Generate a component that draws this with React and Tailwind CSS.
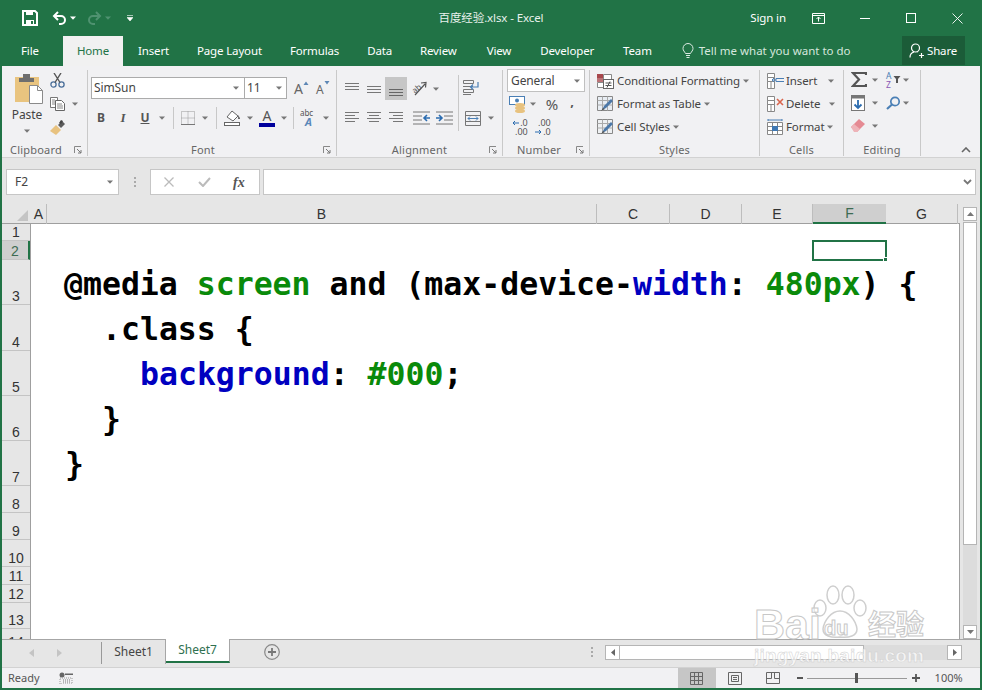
import React from "react";

const Caret = ({ c = "#777" }) => (
  <svg width="6" height="4" viewBox="0 0 6 4" className="shrink-0"><path d="M0 0.5h6L3 3.8z" fill={c} /></svg>
);
const Cell = ({ className = "", children }) => <div className={"flex items-center justify-center shrink-0 h-[22px] " + className}>{children}</div>;
const Sep = ({ className = "" }) => <div className={"w-px h-[22px] bg-[#c8c8c8] shrink-0 " + className} />;

const Launcher = () => (
  <svg width="8" height="8" viewBox="0 0 8 8" className="shrink-0"><path d="M0.5 7V0.5H7" stroke="#888" fill="none" /><path d="M3 3l4 4M7 4v3H4" stroke="#777" fill="none" /></svg>
);

const Group = ({ className, label, launcher, children, labelClass = "" }) => (
  <div className={"shrink-0 h-[86px] mt-[4px] border-r border-[#c9c9c9] flex flex-col " + className}>
    <div className="h-[72px] shrink-0">{children}</div>
    <div className="relative h-[16px] shrink-0 flex items-center justify-center text-[11px] text-[#666] tracking-[0.2px]">
      <span className={labelClass}>{label}</span>
      {launcher && <span className="absolute right-[5px] top-[4px] flex"><Launcher /></span>}
    </div>
  </div>
);

const Lines = ({ rows, w = 14, h = 14, c = "#777" }) => (
  <svg width={w} height={h} viewBox={`0 0 ${w} ${h}`}>
    {rows.map(([x1, x2, y], i) => <path key={i} d={`M${x1} ${y + 0.5}H${x2}`} stroke={c} />)}
  </svg>
);

const Save = () => (
  <svg width="16" height="16" viewBox="0 0 16 16"><path d="M1 1h12l2 2v12H1z" fill="none" stroke="#fff" strokeWidth="2" /><path d="M4 1h7v4H4zM4 10h8v5H4z" fill="#fff" /><path d="M9 11h2v3H9z" fill="#217346" /></svg>
);
const Undo = ({ c = "#fff" }) => (
  <svg width="15" height="14" viewBox="0 0 15 14"><path d="M6 1L2 5l4 4" fill="none" stroke={c} strokeWidth="2" /><path d="M2.5 5H9a4 4 0 0 1 0 8H7" fill="none" stroke={c} strokeWidth="2" /></svg>
);
const Paste = () => (
  <svg width="28" height="30" viewBox="0 0 28 30"><rect x="0" y="3" width="24" height="25" fill="#e9c47f" /><path d="M4 8V4h4V0h7v4h4v4z" fill="#6e6e6e" /><path d="M14.500 11.500h8l5 5v13h-13z" fill="#fff" stroke="#8a8a8a" /><path d="M22.500 11.500v5h5" fill="none" stroke="#8a8a8a" /></svg>
);
const Cut = () => (
  <svg width="15" height="15" viewBox="0 0 15 15"><circle cx="3.500" cy="11.500" r="2.600" fill="none" stroke="#4a6f9a" strokeWidth="1.300" /><circle cx="11.500" cy="11.500" r="2.600" fill="none" stroke="#4a6f9a" strokeWidth="1.300" /><path d="M5 9.500L11 0M10 9.500L4 0" stroke="#555" strokeWidth="1.400" /></svg>
);
const Copy = () => (
  <svg width="16" height="14" viewBox="0 0 16 14"><path d="M0.500 0.500h7v10h-7z" fill="#fff" stroke="#777" /><path d="M5.500 3.500h6l3 3v7h-9z" fill="#fff" stroke="#666" /><path d="M2 3h3M2 5h3M2 7h3M7 7h5M7 9h6M7 11h6" stroke="#888" /></svg>
);
const Painter = () => (
  <svg width="16" height="15" viewBox="0 0 16 15"><path d="M0 11l6-6 5 5-5 5z" fill="#e8c27f" /><path d="M8 5l4-4 3 3-4 4z" fill="#5b5b5b" /><path d="M9 3l2-3 2 1-2 3z" fill="#444" /></svg>
);
const GrowA = ({ up }) => (
  <svg width="15" height="14" viewBox="0 0 15 14" className="overflow-visible">
    <text x={up ? 0 : 1} y="13" fontSize={up ? 14 : 12} fontFamily="Noto Sans" fill="#666">A</text>
    <path d={up ? "M9.500 4l2.500-3.500L14.500 4z" : "M9.500 0h5L12 3.500z"} fill="#5d87b5" />
  </svg>
);
const Borders = () => (
  <svg width="14" height="14" viewBox="0 0 14 14"><path d="M.5.5h13v13H.5zM.5 7h13M7 .5v13" fill="none" stroke="#999" strokeDasharray="1 1" /><path d="M0 13.500h14" stroke="#777" /></svg>
);
const Fill = () => (
  <svg width="17" height="16" viewBox="0 0 17 16"><path d="M3 7l5-6 6 5-5 5z" fill="#fff" stroke="#666" /><path d="M14 5l2 3v1h-2z" fill="#6d6d6d" /><rect x="0.500" y="12.500" width="15" height="3" fill="#fff" stroke="#666" /></svg>
);
const FontColor = () => (
  <div className="flex flex-col items-center w-[16px]">
    <span className="text-[14px] leading-[13px] font-['Noto_Sans'] text-[#555]">A</span>
    <div className="w-[16px] h-[4px] mt-[1px] bg-[#00009c]" />
  </div>
);
const Phonetic = () => (
  <svg width="16" height="16" viewBox="0 0 16 16" className="overflow-visible"><text x="0" y="6" fontSize="8" fontFamily="Noto Sans" fill="#555">abc</text><text x="5" y="16" fontSize="11" fontWeight="bold" fontStyle="italic" fontFamily="Noto Sans" fill="#5b87b8">A</text></svg>
);
const Orient = () => (
  <svg width="16" height="15" viewBox="0 0 16 15" className="overflow-visible"><text x="0" y="11" fontSize="8" fontFamily="Noto Sans" fill="#555" transform="rotate(-40 4 8)">ab</text><path d="M3 14L13 3M9 2l5-.5-.5 5" fill="none" stroke="#555" strokeWidth="1.200" /></svg>
);
const Wrap = () => (
  <svg width="16" height="16" viewBox="0 0 16 16"><path d="M0.500 1.500h10v3h-10zM0.500 10.500h10v3h-10zM0 7.500h10M0 15.500h8" fill="none" stroke="#777" /><path d="M15 3v5H8M10 5.500L7.500 8l2.500 2.500" fill="none" stroke="#4a7fb5" strokeWidth="1.200" /></svg>
);
const Indent = ({ flip }) => (
  <svg width="17" height="14" viewBox="0 0 17 14" className={flip ? "-scale-x-100" : ""}><path d="M0 1h17M0 13h17M8 5h9M8 9h9" stroke="#777" /><path d="M0 7h5M3 4l3 3-3 3" fill="none" stroke="#2b6cb0" strokeWidth="1.600" /></svg>
);
const Merge = () => (
  <svg width="16" height="15" viewBox="0 0 16 15"><path d="M.5.5h15v14H.5zM.5 4.500h15M.5 10.500h15" fill="none" stroke="#777" /><path d="M3 7.500h10M5 5.500l-2 2 2 2M11 5.500l2 2-2 2" fill="none" stroke="#4a7fb5" /></svg>
);
const Accounting = () => (
  <svg width="18" height="17" viewBox="0 0 18 17"><rect x="0.500" y="0.500" width="15" height="8" fill="#fff" stroke="#4a7fb5" /><circle cx="8" cy="4.500" r="2" fill="#4a7fb5" /><ellipse cx="11" cy="9" rx="5" ry="2" fill="#e8c27f" /><ellipse cx="11" cy="12" rx="5" ry="2" fill="#e8c27f" /><ellipse cx="11" cy="15" rx="5" ry="2" fill="#e8c27f" /></svg>
);
const DecBtn = ({ top, bottom, arrowRight }) => (
  <div className="flex flex-col text-[9px] leading-[9px] font-['Noto_Sans'] text-[#555] items-end w-[19px]">
    <div className="flex items-center h-[9px]">
      {!arrowRight ? <svg width="7" height="6" viewBox="0 0 7 6" className="mr-px"><path d="M7 3H1M3 1L1 3l2 2" fill="none" stroke="#2b6cb0" /></svg> : null}
      <span>{top}</span>
    </div>
    <div className="flex items-center h-[9px]">
      {arrowRight ? <svg width="7" height="6" viewBox="0 0 7 6" className="mr-px"><path d="M0 3h6M4 1l2 2-2 2" fill="none" stroke="#2b6cb0" /></svg> : null}
      <span>{bottom}</span>
    </div>
  </div>
);
const TableIc = ({ kind }) => (
  <svg width="17" height="16" viewBox="0 0 17 16">
    {kind === "cond" ? (
      <>
        <path d="M0 1h6v4H0z" fill="#a8484d" /><path d="M0 5h6v4H0z" fill="#a8484d" opacity=".75" /><path d="M6.500 1.500h8v7h-8zM0.500 9.500h7v5h-7z" fill="#fff" stroke="#888" />
        <rect x="6.500" y="6.500" width="10" height="9" fill="#fff" stroke="#666" /><path d="M8.500 10h6M8.500 12.500h6M13 8.500l-3 6" stroke="#555" />
      </>
    ) : (
      <>
        <path d="M.5.5h15v14H.5z" fill={kind === "fmt" ? "#e8edf3" : "#eef0f2"} stroke="#888" /><path d="M.5 4.500h15M.5 9h15M5.500.5v14M10.500.5v14" stroke="#aaa" fill="none" />
        <path d="M5 14l2-4 7-7 2 2-7 7z" fill="#4c78a8" /><path d="M4 15l2-3 2 1z" fill="#555" />
      </>
    )}
  </svg>
);
const CellIc = ({ kind }) => (
  <svg width="17" height="16" viewBox="0 0 17 16">
    {kind === "format" ? (
      <>
        <path d="M.5 3.500h15v12H.5zM.5 7.500h15M.5 11.500h15M5.500 3.500v12M10.500 3.500v12" fill="#fff" stroke="#888" /><rect x="5" y="7" width="6" height="5" fill="#3f78b3" /><path d="M1 1h14M1 0v2M15 0v2" stroke="#4a7fb5" />
      </>
    ) : (
      <>
        <path d="M.5.5h7v4h-7zM.5 4.500h7v4h-7zM.5 8.500h7v7h-7zM4 8.500v7" fill="#fff" stroke="#888" />
        {kind === "insert" ? <path d="M17 5.500H9v3h8M9 7H5M7 5L5 7l2 2" fill="none" stroke="#4a7fb5" /> : <path d="M10 3l6 6M16 3l-6 6" stroke="#d9654c" strokeWidth="1.600" />}
      </>
    )}
  </svg>
);
const Sigma = () => (
  <svg width="16" height="15" viewBox="0 0 16 15"><path d="M15 3V1H2l6 6.500L2 14h13v-2" fill="none" stroke="#555" strokeWidth="2.200" /></svg>
);
const Sort = () => (
  <svg width="15" height="17" viewBox="0 0 15 17" className="overflow-visible"><text x="0" y="7.500" fontSize="8.500" fontFamily="Noto Sans" fill="#4a7fb5">A</text><text x="0" y="16.500" fontSize="8.500" fontFamily="Noto Sans" fill="#8a58b5">Z</text><path d="M7.500 5h7l-2.500 3v4h-2V8z" fill="#555" /></svg>
);
const FillDown = () => (
  <svg width="14" height="16" viewBox="0 0 14 16"><rect x="0.500" y="0.500" width="13" height="15" fill="#fff" stroke="#777" /><rect width="14" height="3.500" fill="#777" /><path d="M7 5v8M3.500 9.500L7 13l3.500-3.500" fill="none" stroke="#2b6cb0" strokeWidth="1.800" /></svg>
);
const Find = () => (
  <svg width="15" height="14" viewBox="0 0 15 14"><circle cx="9" cy="5.500" r="4.200" fill="none" stroke="#4a7fb5" strokeWidth="1.700" /><path d="M6 8.500L1 13" stroke="#4a7fb5" strokeWidth="2.200" /></svg>
);
const Eraser = () => (
  <svg width="14" height="13" viewBox="0 0 14 13"><path d="M0 8l8-8 6 5-8 8H4z" fill="#e58a93" /><path d="M0 8l3-3 6 5-3 3H3z" fill="#eeb3b8" /></svg>
);

const colHeads = [
  ["w-[16px]", "A", false], ["w-[550px]", "B", false], ["w-[73px]", "C", false], ["w-[72px]", "D", false],
  ["w-[71px]", "E", false], ["w-[73px]", "F", true], ["w-[72px]", "G", false],
];
const rowHeads = [
  ["h-[17px]", "1"], ["h-[19px]", "2", true], ["h-[45px]", "3"], ["h-[46px]", "4"], ["h-[45px]", "5"], ["h-[45px]", "6"], ["h-[45px]", "7"],
  ["h-[27px]", "8"], ["h-[27px]", "9"], ["h-[27px]", "10"], ["h-[18px]", "11"], ["h-[18px]", "12"], ["h-[26px]", "13"], ["h-[22px]", "14"],
];

const G = ({ children }) => <span className="text-[#0a8a0a]">{children}</span>;
const B = ({ children }) => <span className="text-[#0000c0]">{children}</span>;

export default function App() {
  return (
    <div className="w-[982px] h-[690px] overflow-hidden bg-[#217346] px-[2px] pb-[2px] flex flex-col font-['Noto_Sans','Noto_Sans_CJK_SC',sans-serif] relative">
      {/* title bar */}
      <div className="grid grid-cols-[1fr_auto_1fr] h-[36px] shrink-0 items-center text-white text-[11.500px] tracking-[-0.1px]">
        <div className="flex items-center">
          <div className="ml-[20px] flex"><Save /></div>
          <div className="ml-[14px] flex"><Undo /></div>
          <div className="ml-[3px] flex"><Caret c="#fff" /></div>
          <div className="ml-[11px] flex -scale-x-100"><Undo c="#4f9270" /></div>
          <div className="ml-[3px] flex"><Caret c="#4f9270" /></div>
          <svg width="6" height="6" viewBox="0 0 6 6" className="ml-[16px]"><path d="M0 .5h6M0 2.500h6L3 6z" stroke="#fff" strokeWidth=".6" fill="#fff" /></svg>
        </div>
        <div className="text-[11.500px] text-[#e8f1ec]">百度经验.xlsx - Excel</div>
        <div className="flex items-center justify-end">
          <span className="text-[11.500px]">Sign in</span>
          <svg width="13" height="11" viewBox="0 0 13 11" className="ml-[26px]"><path d="M.5.5h12v10H.5zM.5 2.500h12" fill="none" stroke="#fff" /><path d="M6.500 8.500V4M4.500 6l2-2 2 2" fill="none" stroke="#fff" /></svg>
          <div className="ml-[35px] w-[10px] h-px bg-white" />
          <div className="ml-[36px] w-[10px] h-[10px] border border-white" />
          <svg width="11" height="11" viewBox="0 0 11 11" className="ml-[36px] mr-[17px]"><path d="M.5.5l10 10M10.500.5l-10 10" stroke="#fff" strokeWidth=".9" /></svg>
        </div>
      </div>

      {/* tabs */}
      <div className="flex h-[30px] shrink-0 items-center text-[11.500px] tracking-[-0.15px] text-white">
        <span className="ml-[19px] w-[42px]">File</span>
        <div className="h-[30px] w-[60px] bg-[#f1f1f1] text-[#217346] flex items-center justify-center">Home</div>
        <span className="ml-[15px]">Insert</span>
        <span className="ml-[28px]">Page Layout</span>
        <span className="ml-[28px]">Formulas</span>
        <span className="ml-[28px]">Data</span>
        <span className="ml-[28px]">Review</span>
        <span className="ml-[30px]">View</span>
        <span className="ml-[29px]">Developer</span>
        <span className="ml-[29px]">Team</span>
        <svg width="12" height="16" viewBox="0 0 12 16" className="ml-[30px] shrink-0"><path d="M3.500 10.500C2.500 8.500 1 7.500 1 5.500a5 5 0 0 1 10 0c0 2-1.500 3-2.500 5zM4 12.500h4M4.500 14.500h3" fill="none" stroke="#dcebe3" /></svg>
        <span className="ml-[5px] text-[#d5e7dd] tracking-[0px]">Tell me what you want to do</span>
        <div className="ml-auto mr-[15px] mb-px w-[63px] h-[29px] bg-[#1b5c38] flex items-center pl-[7px]">
          <svg width="15" height="15" viewBox="0 0 15 15"><circle cx="6.500" cy="5" r="4" fill="none" stroke="#fff" strokeWidth="1.200" /><path d="M1 14.500c0-3 2-5 4-5.500M8 9l.5 0M10 12.500h5M12.500 10v5" fill="none" stroke="#fff" strokeWidth="1.200" /></svg>
          <span className="ml-[3px]">Share</span>
        </div>
      </div>

      {/* ribbon */}
      <div className="flex h-[92px] shrink-0 bg-[#f1f1f3] border-b border-[#d2d2d2] text-[11.500px] tracking-[-0.1px] text-[#444] relative">
        <Group className="w-[86px]" label="Clipboard" launcher labelClass="-ml-[17px]">
          <div className="flex">
            <div className="ml-[9px] w-[32px] flex flex-col items-center pt-[4px]">
              <div className="flex ml-[3px]"><Paste /></div>
              <span className="leading-[14px] mt-[4px] text-[12px]">Paste</span>
              <div className="mt-[7px] flex"><Caret /></div>
            </div>
            <div className="ml-[7px] flex flex-col pt-[3px]">
              <Cut />
              <div className="flex items-center mt-[9px]"><Copy /><div className="ml-[6px] flex"><Caret /></div></div>
              <div className="mt-[9px] flex"><Painter /></div>
            </div>
          </div>
        </Group>

        <Group className="w-[249px]" label="Font" launcher labelClass="-ml-[18px]">
          <div className="flex items-center mt-[7px] ml-[3px]">
            <div className="w-[154px] h-[22px] bg-white border border-[#ababab] flex items-center pl-[2px] pr-[5px] justify-between"><span className="text-[12px]">SimSun</span><Caret /></div>
            <div className="w-[43px] h-[22px] -ml-px bg-white border border-[#ababab] flex items-center pl-[2px] pr-[4px] justify-between"><span className="text-[12px]">11</span><Caret /></div>
            <div className="ml-[7px] flex"><GrowA up /></div>
            <div className="ml-[6px] flex"><GrowA /></div>
          </div>
          <div className="flex items-center mt-[8px] ml-[2px]">
            <Cell className="w-[22px] font-bold text-[12px] text-[#555]">B</Cell>
            <Cell className="w-[22px] italic text-[13px] font-['Liberation_Serif'] font-bold text-[#555]">I</Cell>
            <Cell className="w-[22px] underline font-bold text-[12px] text-[#555]">U</Cell>
            <Cell className="w-[12px]"><Caret /></Cell>
            <Sep className="ml-[5px]" />
            <Cell className="w-[28px]"><Borders /></Cell>
            <Cell className="w-[6px]"><Caret /></Cell>
            <Sep className="ml-[8px]" />
            <Cell className="w-[30px]"><Fill /></Cell>
            <Cell className="w-[6px]"><Caret /></Cell>
            <Cell className="w-[28px]"><FontColor /></Cell>
            <Cell className="w-[6px]"><Caret /></Cell>
            <Sep className="ml-[6px]" />
            <Cell className="w-[28px]"><Phonetic /></Cell>
            <Cell className="w-[8px]"><Caret /></Cell>
          </div>
        </Group>

        <Group className="w-[166px]" label="Alignment" launcher>
          <div className="flex">
            <div className="w-[122px] shrink-0 border-r border-[#c8c8c8] h-[56px] mt-[5px]">
              <div className="flex items-center ml-[4px] mt-[2px]">
                <Cell className="w-[22px] h-[23px]"><Lines rows={[[0, 14, 1], [0, 14, 4], [0, 14, 7]]} /></Cell>
                <Cell className="w-[22px] h-[23px]"><Lines rows={[[0, 14, 4], [0, 14, 7], [0, 14, 10]]} /></Cell>
                <Cell className="w-[22px] h-[23px] bg-[#c6c6c6]"><Lines c="#666" rows={[[0, 14, 7], [0, 14, 10], [0, 14, 13]]} /></Cell>
                <Cell className="w-[24px] h-[23px] ml-[1px]"><Orient /></Cell>
                <Cell className="w-[8px] h-[23px]"><Caret /></Cell>
              </div>
              <div className="flex items-center ml-[4px] mt-[7px]">
                <Cell className="w-[22px]"><Lines rows={[[0, 14, 1], [0, 10, 4], [0, 14, 7], [0, 10, 10]]} /></Cell>
                <Cell className="w-[22px]"><Lines rows={[[0, 14, 1], [2, 12, 4], [0, 14, 7], [2, 12, 10]]} /></Cell>
                <Cell className="w-[22px]"><Lines rows={[[0, 14, 1], [4, 14, 4], [0, 14, 7], [4, 14, 10]]} /></Cell>
                <Cell className="w-[24px] ml-[2px]"><Indent flip /></Cell>
                <Cell className="w-[22px]"><Indent /></Cell>
              </div>
            </div>
            <div className="flex flex-col">
              <Cell className="w-[24px] mt-[6px]"><Wrap /></Cell>
              <div className="flex items-center mt-[9px] ml-[4px]"><Cell className="w-[20px]"><Merge /></Cell><Cell className="w-[14px] ml-[1px]"><Caret /></Cell></div>
            </div>
          </div>
        </Group>

        <Group className="w-[87px]" label="Number" launcher labelClass="-ml-[14px]">
          <div className="ml-[4px] -mt-px w-[78px] h-[23px] bg-white border border-[#c0c0c0] flex items-center pl-[3px] pr-[4px] justify-between"><span className="text-[12px]">General</span><Caret /></div>
          <div className="flex items-center ml-[5px] mt-[1px]">
            <Cell className="w-[20px]"><Accounting /></Cell>
            <Cell className="w-[8px] ml-[1px]"><Caret /></Cell>
            <Cell className="w-[24px] text-[15px] text-[#555] ml-[3px]">%</Cell>
            <Cell className="w-[14px] ml-[1px] font-bold text-[#555] text-[13px] pb-[4px]">,</Cell>
          </div>
          <div className="flex items-center ml-[5px] mt-[1px]">
            <Cell className="w-[20px]"><DecBtn top=".0" bottom=".00" /></Cell>
            <Cell className="w-[20px] ml-[3px]"><DecBtn top=".00" bottom=".0" arrowRight /></Cell>
          </div>
        </Group>

        <Group className="w-[170px]" label="Styles">
          <div className="flex flex-col pl-[7px] -mt-px">
            <div className="flex items-center h-[23px]"><TableIc kind="cond" /><span className="ml-[3px]">Conditional Formatting</span><div className="ml-[3px] flex"><Caret /></div></div>
            <div className="flex items-center h-[23px]"><TableIc kind="fmt" /><span className="ml-[3px]">Format as Table</span><div className="ml-[3px] flex"><Caret /></div></div>
            <div className="flex items-center h-[23px]"><TableIc kind="style" /><span className="ml-[3px]">Cell Styles</span><div className="ml-[3px] flex"><Caret /></div></div>
          </div>
        </Group>

        <Group className="w-[84px]" label="Cells">
          <div className="flex flex-col pl-[7px] -mt-px">
            <div className="flex items-center h-[23px]"><CellIc kind="insert" /><span className="ml-[2px]">Insert</span><div className="ml-[11px] flex"><Caret /></div></div>
            <div className="flex items-center h-[23px]"><CellIc kind="delete" /><span className="ml-[2px]">Delete</span><div className="ml-[9px] flex"><Caret /></div></div>
            <div className="flex items-center h-[23px]"><CellIc kind="format" /><span className="ml-[2px]">Format</span><div className="ml-[3px] flex"><Caret /></div></div>
          </div>
        </Group>

        <Group className="w-[77px]" label="Editing">
          <div className="flex flex-col pl-[7px] -mt-[2px]">
            <div className="flex items-center h-[23px]"><div className="w-[16px] flex"><Sigma /></div><div className="ml-[5px] flex"><Caret /></div><div className="ml-[8px] flex"><Sort /></div><div className="ml-[2px] flex"><Caret /></div></div>
            <div className="flex items-center h-[23px]"><div className="w-[16px] flex"><FillDown /></div><div className="ml-[5px] flex"><Caret /></div><div className="ml-[8px] flex"><Find /></div><div className="ml-[2px] flex"><Caret /></div></div>
            <div className="flex items-center h-[23px]"><div className="w-[16px] flex"><Eraser /></div><div className="ml-[5px] flex"><Caret /></div></div>
          </div>
        </Group>

        <svg width="10" height="6" viewBox="0 0 10 6" className="absolute right-[9px] bottom-[4px]"><path d="M1 5l4-4 4 4" fill="none" stroke="#666" strokeWidth="1.600" /></svg>
      </div>

      {/* formula bar */}
      <div className="flex h-[46px] shrink-0 bg-[#e6e6e6] pt-[11px] text-[12px] text-[#444]">
        <div className="ml-[4px] w-[113px] h-[26px] bg-white border border-[#c6c6c6] flex items-center pl-[8px] pr-[5px] justify-between"><span>F2</span><Caret /></div>
        <div className="w-[31px] flex flex-col items-center justify-center gap-[2px] h-[26px]">
          <i className="w-[2px] h-[2px] bg-[#aaa]" /><i className="w-[2px] h-[2px] bg-[#aaa]" /><i className="w-[2px] h-[2px] bg-[#aaa]" />
        </div>
        <div className="w-[110px] h-[26px] bg-white border border-[#c6c6c6] flex items-center">
          <svg width="10" height="10" viewBox="0 0 10 10" className="ml-[13px]"><path d="M.5.5l9 9M9.500.5l-9 9" stroke="#bbb" strokeWidth="1.300" /></svg>
          <svg width="13" height="10" viewBox="0 0 13 10" className="ml-[24px]"><path d="M1 5l4 4 7-8" fill="none" stroke="#bbb" strokeWidth="2" /></svg>
          <span className="ml-[22px] font-['Liberation_Serif'] italic font-bold text-[14px] text-[#555]">fx</span>
        </div>
        <div className="ml-[3px] w-[713px] h-[26px] bg-white border border-[#c6c6c6] flex items-center justify-end pr-[3px]">
          <svg width="9" height="6" viewBox="0 0 9 6"><path d="M1 1l3.500 3.500L8 1" fill="none" stroke="#777" strokeWidth="1.800" /></svg>
        </div>
      </div>

      {/* grid area */}
      <div className="flex flex-1 min-h-0 bg-[#e6e6e6]">
        <div className="w-[958px] flex flex-col">
          <div className="flex h-[20px] shrink-0 border-b border-[#9f9f9f] font-['Liberation_Sans'] text-[14px] text-[#333]">
            <div className="w-[29px] relative">
              <div className="absolute right-[3px] bottom-[2px] w-0 h-0 border-l-[11px] border-l-transparent border-b-[11px] border-b-[#c4c4c4]" />
            </div>
            {colHeads.map(([w, t, sel]) => (
              <div key={t} className={w + " flex items-center justify-center border-r border-[#bdbdbd] -mb-px " + (sel ? "bg-[#cfcfcf] text-[#3d6b52] border-b-2 border-b-[#217346] border-r-0 pt-px" : "")}>{t}</div>
            ))}
          </div>
          <div className="flex flex-1 min-h-0 relative">
            <div className="w-[29px] shrink-0 border-r border-[#9f9f9f] overflow-hidden font-['Liberation_Sans'] text-[14px] leading-[16px] text-[#333]">
              {rowHeads.map(([h, t, sel]) => (
                <div key={t} className={h + " flex items-end justify-center border-b border-[#c4c4c4] " + (sel ? "bg-[#cfcfcf] text-[#3d6b52] border-r-2 border-r-[#217346]" : "")}>{t}</div>
              ))}
            </div>
            <div className="flex-1 bg-white border-r border-[#9f9f9f] relative pt-[38px] pl-[33px]">
              <div className="font-['DejaVu_Sans_Mono'] font-bold text-[31.500px] leading-[45px] text-[#000] whitespace-pre">
                <div>@media <G>screen</G> and (max-device-<B>width</B>: <G>480px</G>) {"{"}</div>
                <div className="pl-[38px]">.class {"{"}</div>
                <div className="pl-[76px]"><B>background</B>: <G>#000</G>;</div>
                <div className="pl-[38px]">{"}"}</div>
                <div className="pl-[1px]">{"}"}</div>
              </div>
              <div className="absolute left-[781px] top-[16px] w-[75px] h-[21px] border-2 border-[#217346]">
                <div className="absolute -right-[3px] -bottom-[3px] w-[5px] h-[5px] bg-[#217346] border border-white" />
              </div>
            </div>
          </div>
        </div>
        {/* vertical scrollbar */}
        <div className="w-[20px] flex flex-col pl-[3px] pt-[3px] pr-[3px]">
          <div className="w-[14px] h-[14px] bg-white border border-[#b5b5b5] flex items-center justify-center"><svg width="7" height="4" viewBox="0 0 7 4"><path d="M0 4l3.500-4L7 4z" fill="#777" /></svg></div>
          <div className="w-[14px] h-[323px] mt-px bg-white border border-[#b5b5b5]" />
          <div className="w-[14px] flex-1 bg-[#dcdcdc]" />
          <div className="w-[14px] h-[14px] bg-white border border-[#b5b5b5] flex items-center justify-center"><svg width="7" height="4" viewBox="0 0 7 4"><path d="M0 0h7L3.500 4z" fill="#777" /></svg></div>
        </div>
      </div>

      {/* sheet tabs */}
      <div className="flex h-[28px] shrink-0 bg-[#e6e6e6] border-t border-[#a6a6a6] items-start text-[12px] text-[#444] relative">
        <svg width="5" height="8" viewBox="0 0 5 8" className="ml-[27px] mt-[9px]"><path d="M5 0v8L0 4z" fill="#c4c4c4" /></svg>
        <svg width="5" height="8" viewBox="0 0 5 8" className="ml-[23px] mt-[9px]"><path d="M0 0v8l5-4z" fill="#c4c4c4" /></svg>
        <div className="ml-[39px] w-px h-[22px] mt-[2px] bg-[#999]" />
        <div className="w-[64px] h-[24px] flex items-center justify-center border-r border-[#a6a6a6]">Sheet1</div>
        <div className="w-[64px] h-[24px] -mt-px bg-white text-[#2f7050] border-r border-[#a6a6a6] border-b-2 border-b-[#217346] flex items-center justify-center">Sheet7</div>
        <svg width="16" height="16" viewBox="0 0 16 16" className="ml-[34px] mt-[4px]"><circle cx="8" cy="8" r="7.300" fill="none" stroke="#888" strokeWidth="1.200" /><path d="M8 4v8M4 8h8" stroke="#777" strokeWidth="1.800" /></svg>
        <div className="ml-[311px] mt-[7px] flex flex-col gap-[2px]">
          <i className="w-[2px] h-[2px] bg-[#aaa]" /><i className="w-[2px] h-[2px] bg-[#aaa]" /><i className="w-[2px] h-[2px] bg-[#aaa]" />
        </div>
        <div className="ml-[12px] mt-[5px] flex h-[15px]">
          <div className="w-[15px] bg-white border border-[#b5b5b5] flex items-center justify-center"><svg width="4" height="7" viewBox="0 0 4 7"><path d="M4 0v7L0 3.500z" fill="#666" /></svg></div>
          <div className="w-[244px] bg-white border border-[#b5b5b5] border-l-0" />
          <div className="w-[83px] bg-[#dcdcdc]" />
          <div className="w-[15px] bg-white border border-[#b5b5b5] flex items-center justify-center"><svg width="4" height="7" viewBox="0 0 4 7"><path d="M0 0v7l4-3.500z" fill="#666" /></svg></div>
        </div>
      </div>

      {/* status bar */}
      <div className="flex h-[21px] shrink-0 bg-[#f1f1f3] border-t border-[#d2d2d2] items-center text-[11px] text-[#555]">
        <span className="ml-[6px]">Ready</span>
        <svg width="14" height="12" viewBox="0 0 14 12" className="ml-[19px]"><circle cx="3" cy="3" r="2.500" fill="#666" /><path d="M6 1.500h8V3H6z" fill="#666" /><path d="M1 6h12v6H1z" fill="none" stroke="#999" strokeDasharray="1 1" /><path d="M4 8h8M4 10h8" stroke="#777" strokeDasharray="1 1" /></svg>
        <div className="ml-[605px] w-[38px] h-[20px] bg-[#c6c6c6] flex items-center justify-center">
          <svg width="13" height="13" viewBox="0 0 13 13"><path d="M.5.5h12v12H.5zM.5 4.500h12M.5 8.500h12M4.500.5v12M8.500.5v12" fill="none" stroke="#666" /></svg>
        </div>
        <svg width="14" height="13" viewBox="0 0 14 13" className="ml-[12px]"><path d="M.5.5h13v12H.5z" fill="none" stroke="#666" /><path d="M3.500 3.500h7v6h-7zM5 5.500h4M5 7.500h4" fill="none" stroke="#666" /></svg>
        <svg width="14" height="12" viewBox="0 0 14 12" className="ml-[24px]"><path d="M.5.5h13v11H.5zM.5 6.500h5v-6M8.500.5v6h5" fill="none" stroke="#666" /></svg>
        <div className="ml-[17px] w-[6px] h-[2px] bg-[#555]" />
        <div className="ml-[4px] w-[100px] h-px bg-[#999] relative"><div className="absolute left-[48px] -top-[5px] w-[3px] h-[10px] bg-[#555]" /></div>
        <svg width="8" height="8" viewBox="0 0 8 8" className="ml-[5px]"><path d="M4 0v8M0 4h8" stroke="#555" strokeWidth="1.800" /></svg>
        <span className="ml-[15px]">100%</span>
      </div>

      {/* watermark */}
      <div className="absolute left-[754px] top-[584px] w-[176px] h-[84px] pointer-events-none">
        <svg width="62" height="56" viewBox="0 0 62 56" className="absolute left-[56px] top-0 overflow-visible" fill="rgba(255,255,255,.35)" stroke="#cfcfcf" strokeWidth="1.500">
          <ellipse cx="23" cy="11" rx="6" ry="9" /><ellipse cx="38" cy="11" rx="6" ry="9" /><ellipse cx="10" cy="24" rx="6" ry="8" /><ellipse cx="50" cy="24" rx="6" ry="8" />
          <path d="M30 27c9 0 16 10 17 18 0 7-8 9-17 8-9 1-17-1-17-8 1-8 8-18 17-18z" />
        </svg>
        <span className="absolute left-0 top-[18px] font-['Liberation_Sans'] font-bold text-[43px] leading-[44px] text-white/50 [-webkit-text-stroke:1px_#c8c8c8]">Bai</span>
        <span className="absolute left-[70px] top-[33px] font-['Liberation_Sans'] font-bold text-[20px] leading-[22px] text-white/50 [-webkit-text-stroke:1px_#c8c8c8]">du</span>
        <span className="absolute left-[114px] top-[22px] font-['Noto_Sans_CJK_SC'] font-bold text-[28px] leading-[34px] text-white/50 [-webkit-text-stroke:1px_#c8c8c8]">经验</span>
        <span className="absolute left-0 top-[60px] font-['Liberation_Sans'] text-[19px] leading-[24px] tracking-[0.2px] font-bold text-white/70 [-webkit-text-stroke:0.5px_#cfcfcf]">jingyan.baidu.com</span>
      </div>
    </div>
  );
}
